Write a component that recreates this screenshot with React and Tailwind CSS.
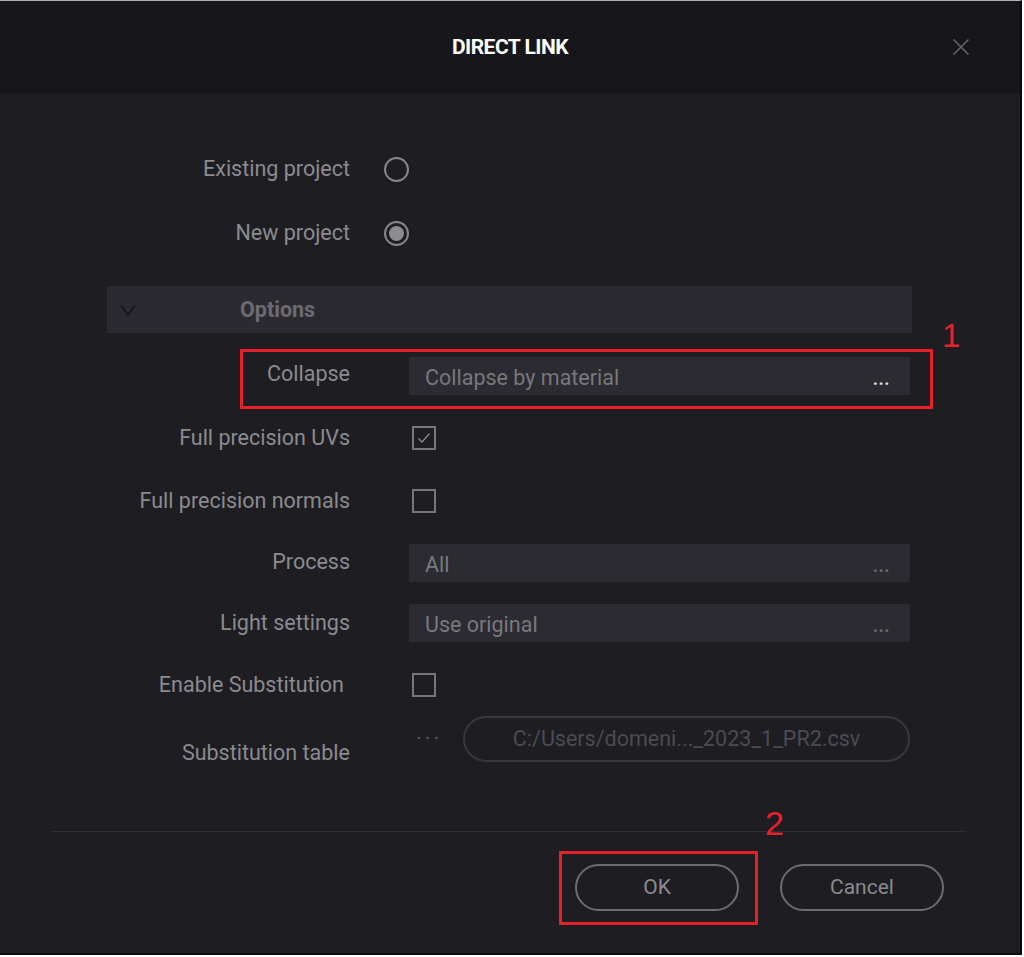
import React from "react";

function Radio({ checked }) {
  return (
    <div className="w-[25px] h-[25px] rounded-full border-2 border-[#87878b] flex items-center justify-center">
      {checked && <div className="w-[15px] h-[15px] rounded-full bg-[#8c8c90]" />}
    </div>
  );
}

function Checkbox({ checked }) {
  return (
    <div className="w-[24px] h-[24px] border-2 border-[#77777b] flex items-center justify-center">
      {checked && (
        <svg width="16" height="16" viewBox="0 0 16 16" fill="none">
          <path d="M2.5 8.5 L6 12 L13.5 3.5" stroke="#8a8a8e" strokeWidth="1.2" />
        </svg>
      )}
    </div>
  );
}

function Label({ children, extra = "" }) {
  return (
    <div className={`w-[350px] shrink-0 text-right text-[21.5px] text-[#8b8b90] leading-none ${extra}`}>
      {children}
    </div>
  );
}

function Field({ value, dots = "text-[#6f6f74]" }) {
  return (
    <div className="ml-[59px] w-[501px] h-[38px] bg-[#2c2b31] flex items-center justify-between pl-[16px] pr-[20px]">
      <span className="text-[21.5px] text-[#78787d] leading-none pt-[4px]">{value}</span>
      <span className={`text-[18px] font-bold tracking-[0.5px] leading-none pt-[6px] ${dots}`}>...</span>
    </div>
  );
}

export default function App() {
  return (
    <div className="w-[1024px] h-[957px] bg-white font-['Roboto',sans-serif]">
      <div className="w-[1022px] h-[955px] bg-[#1e1d22] border-t border-[#b0b0b0] border-r-2 border-b-2 border-r-[#0a0a0a] border-b-[#0a0a0a] flex flex-col">
        {/* Header */}
        <div className="h-[93px] bg-[#17161b] flex items-center justify-center relative shrink-0">
          <span className="text-white font-bold text-[21px] tracking-tight pt-[1px]">DIRECT LINK</span>
          <div className="absolute right-[50px] top-[37px]">
            <svg width="18" height="18" viewBox="0 0 18 18" fill="none">
              <path d="M1.5 1.5 L16.5 16.5 M16.5 1.5 L1.5 16.5" stroke="#66666b" strokeWidth="1.5" />
            </svg>
          </div>
        </div>

        {/* Body */}
        <div className="flex flex-col">
          <div className="mt-[55px] h-[40px] flex items-center">
            <Label>Existing project</Label>
            <div className="ml-[34px]"><Radio /></div>
          </div>
          <div className="mt-[24px] h-[40px] flex items-center">
            <Label>New project</Label>
            <div className="ml-[34px]"><Radio checked /></div>
          </div>

          <div className="mt-[33px] ml-[107px] w-[805px] h-[47px] bg-[#2b2a30] flex items-center">
            <svg className="ml-[13px]" width="16" height="12" viewBox="0 0 16 12" fill="none">
              <path d="M1 1 L8 11 L15 1" stroke="#151419" strokeWidth="2" />
            </svg>
            <span className="ml-[104px] text-[21.5px] font-bold text-[#6b6b70] leading-none">Options</span>
          </div>

          <div className="mt-[24px] h-[38px] flex items-center relative">
            <Label extra="-mt-[4px]">Collapse</Label>
            <Field value="Collapse by material" dots="text-[#dcdce0]" />
            <div className="absolute left-[240px] top-[-8px] w-[693px] h-[60px] border-[3px] border-[#e8202a]" />
            <span className="absolute left-[942px] top-[-38px] text-[33px] text-[#e8202a] leading-none font-['Liberation_Sans',sans-serif]">1</span>
          </div>

          <div className="mt-[24px] h-[38px] flex items-center">
            <Label>Full precision UVs</Label>
            <div className="ml-[62px]"><Checkbox checked /></div>
          </div>
          <div className="mt-[25px] h-[38px] flex items-center">
            <Label>Full precision normals</Label>
            <div className="ml-[62px]"><Checkbox /></div>
          </div>
          <div className="mt-[24px] h-[38px] flex items-center">
            <Label extra="-mt-[2px]">Process</Label>
            <Field value="All" />
          </div>
          <div className="mt-[22px] h-[38px] flex items-center">
            <Label extra="-mt-[1px]">Light settings</Label>
            <Field value="Use original" />
          </div>
          <div className="mt-[24px] h-[38px] flex items-center">
            <Label extra="pr-[6px] -mt-[1px]">Enable Substitution</Label>
            <div className="ml-[62px]"><Checkbox /></div>
          </div>
          <div className="mt-[12px] h-[46px] flex items-center">
            <Label extra="mt-[28px]">Substitution table</Label>
            <span className="ml-[66px] w-[47px] text-[22px] text-[#5a5a5f] tracking-[3px] leading-none">···</span>
            <div className="w-[447px] h-[46px] rounded-full border-2 border-[#38373d] flex items-center justify-center">
              <span className="text-[21.5px] text-[#4c4b51] leading-none">C:/Users/domeni..._2023_1_PR2.csv</span>
            </div>
          </div>

          <div className="mt-[69px] ml-[52px] w-[914px] h-px bg-[#2f2e34]" />

          <div className="mt-[32px] flex justify-end pr-[76px] gap-[41px] relative">
            <div className="w-[164px] h-[47px] rounded-full border-2 border-[#6c6c71] flex items-center justify-center">
              <span className="text-[21px] text-[#8a8a8f] leading-none">OK</span>
            </div>
            <div className="w-[164px] h-[47px] rounded-full border-2 border-[#6c6c71] flex items-center justify-center">
              <span className="text-[21px] text-[#8a8a8f] leading-none">Cancel</span>
            </div>
            <div className="absolute left-[559px] top-[-13px] w-[199px] h-[74px] border-[3px] border-[#e8202a]" />
            <span className="absolute left-[765px] top-[-58px] text-[34px] text-[#e8202a] leading-none font-['Liberation_Sans',sans-serif]">2</span>
          </div>
        </div>
      </div>
    </div>
  );
}
